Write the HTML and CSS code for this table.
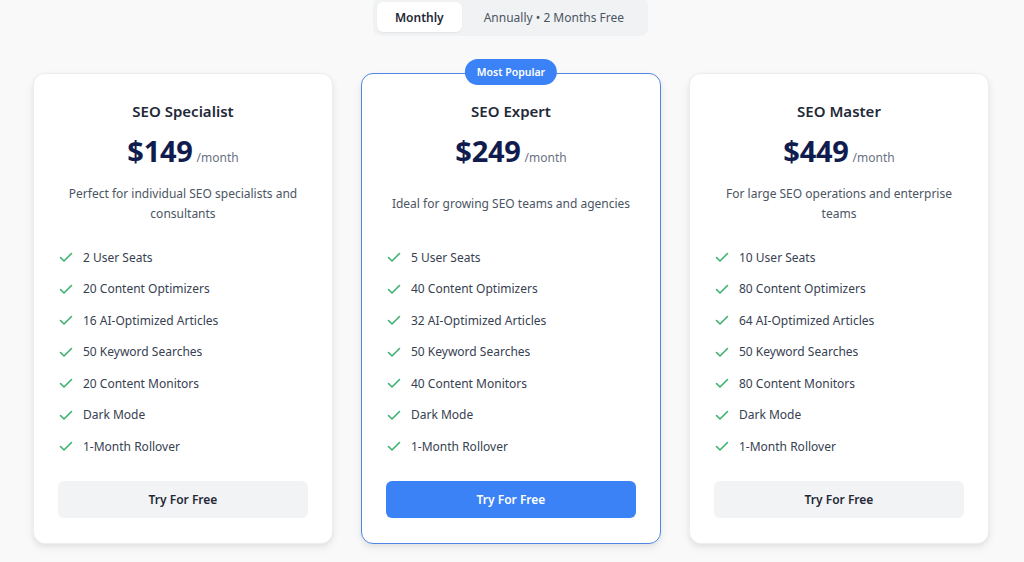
FILE: index.html
```html
<!DOCTYPE html>
<html lang="en">
<head>
<meta charset="utf-8">
<title>Pricing</title>
<link rel="stylesheet" href="styles.css">
</head>
<body>
<div class="page">
  <div class="toggle">
    <button class="toggle-opt active">Monthly</button>
    <button class="toggle-opt">Annually • 2 Months Free</button>
  </div>

  <div class="plans">
    <div class="card">
      <h3 class="plan-name">SEO Specialist</h3>
      <div class="price"><span class="amount">$149</span><span class="per">/month</span></div>
      <p class="desc">Perfect for individual SEO specialists and consultants</p>
      <ul class="features">
        <li><svg class="check" viewBox="0 0 16 16"><path d="M2.5 8.5l3.5 3.5 7.5-7.5"/></svg>2 User Seats</li>
        <li><svg class="check" viewBox="0 0 16 16"><path d="M2.5 8.5l3.5 3.5 7.5-7.5"/></svg>20 Content Optimizers</li>
        <li><svg class="check" viewBox="0 0 16 16"><path d="M2.5 8.5l3.5 3.5 7.5-7.5"/></svg>16 AI-Optimized Articles</li>
        <li><svg class="check" viewBox="0 0 16 16"><path d="M2.5 8.5l3.5 3.5 7.5-7.5"/></svg>50 Keyword Searches</li>
        <li><svg class="check" viewBox="0 0 16 16"><path d="M2.5 8.5l3.5 3.5 7.5-7.5"/></svg>20 Content Monitors</li>
        <li><svg class="check" viewBox="0 0 16 16"><path d="M2.5 8.5l3.5 3.5 7.5-7.5"/></svg>Dark Mode</li>
        <li><svg class="check" viewBox="0 0 16 16"><path d="M2.5 8.5l3.5 3.5 7.5-7.5"/></svg>1-Month Rollover</li>
      </ul>
      <button class="cta">Try For Free</button>
    </div>

    <div class="card featured">
      <span class="badge">Most Popular</span>
      <h3 class="plan-name">SEO Expert</h3>
      <div class="price"><span class="amount">$249</span><span class="per">/month</span></div>
      <p class="desc">Ideal for growing SEO teams and agencies</p>
      <ul class="features">
        <li><svg class="check" viewBox="0 0 16 16"><path d="M2.5 8.5l3.5 3.5 7.5-7.5"/></svg>5 User Seats</li>
        <li><svg class="check" viewBox="0 0 16 16"><path d="M2.5 8.5l3.5 3.5 7.5-7.5"/></svg>40 Content Optimizers</li>
        <li><svg class="check" viewBox="0 0 16 16"><path d="M2.5 8.5l3.5 3.5 7.5-7.5"/></svg>32 AI-Optimized Articles</li>
        <li><svg class="check" viewBox="0 0 16 16"><path d="M2.5 8.5l3.5 3.5 7.5-7.5"/></svg>50 Keyword Searches</li>
        <li><svg class="check" viewBox="0 0 16 16"><path d="M2.5 8.5l3.5 3.5 7.5-7.5"/></svg>40 Content Monitors</li>
        <li><svg class="check" viewBox="0 0 16 16"><path d="M2.5 8.5l3.5 3.5 7.5-7.5"/></svg>Dark Mode</li>
        <li><svg class="check" viewBox="0 0 16 16"><path d="M2.5 8.5l3.5 3.5 7.5-7.5"/></svg>1-Month Rollover</li>
      </ul>
      <button class="cta primary">Try For Free</button>
    </div>

    <div class="card">
      <h3 class="plan-name">SEO Master</h3>
      <div class="price"><span class="amount">$449</span><span class="per">/month</span></div>
      <p class="desc">For large SEO operations and enterprise teams</p>
      <ul class="features">
        <li><svg class="check" viewBox="0 0 16 16"><path d="M2.5 8.5l3.5 3.5 7.5-7.5"/></svg>10 User Seats</li>
        <li><svg class="check" viewBox="0 0 16 16"><path d="M2.5 8.5l3.5 3.5 7.5-7.5"/></svg>80 Content Optimizers</li>
        <li><svg class="check" viewBox="0 0 16 16"><path d="M2.5 8.5l3.5 3.5 7.5-7.5"/></svg>64 AI-Optimized Articles</li>
        <li><svg class="check" viewBox="0 0 16 16"><path d="M2.5 8.5l3.5 3.5 7.5-7.5"/></svg>50 Keyword Searches</li>
        <li><svg class="check" viewBox="0 0 16 16"><path d="M2.5 8.5l3.5 3.5 7.5-7.5"/></svg>80 Content Monitors</li>
        <li><svg class="check" viewBox="0 0 16 16"><path d="M2.5 8.5l3.5 3.5 7.5-7.5"/></svg>Dark Mode</li>
        <li><svg class="check" viewBox="0 0 16 16"><path d="M2.5 8.5l3.5 3.5 7.5-7.5"/></svg>1-Month Rollover</li>
      </ul>
      <button class="cta">Try For Free</button>
    </div>
  </div>
</div>
</body>
</html>
```

FILE: styles.css
```css
* { box-sizing: border-box; }

html, body {
  margin: 0;
  padding: 0;
  background: #f9f9fa;
  font-family: "Noto Sans", "Open Sans", sans-serif;
  color: #1f2937;
}

.page {
  display: flex;
  flex-direction: column;
  align-items: center;
  height: 562px;
  overflow: hidden;
}

.toggle {
  display: flex;
  margin-top: -3px;
  margin-left: -3px;
  padding: 5px 4px 4px;
  background: #f1f2f4;
  border-radius: 8px;
}

.toggle-opt {
  border: none;
  background: transparent;
  font-family: inherit;
  font-size: 12px;
  font-weight: 400;
  color: #4b5563;
  height: 30px;
  padding: 0 20px 0 22px;
  border-radius: 6px;
  cursor: pointer;
}

.toggle-opt.active {
  background: #ffffff;
  color: #1f2937;
  font-weight: 600;
  padding: 0 18px;
  box-shadow: 0 1px 2px rgba(0,0,0,0.06);
}

.plans {
  display: flex;
  gap: 28px;
  margin-top: 37px;
  margin-left: -2px;
}

.card {
  position: relative;
  width: 300px;
  background: #ffffff;
  border: 1px solid #eceef1;
  border-radius: 12px;
  padding: 27px 24px 25px;
  display: flex;
  flex-direction: column;
  align-items: stretch;
  box-shadow: 0 2px 4px rgba(0,0,0,0.05), 0 4px 10px rgba(0,0,0,0.06);
}

.card.featured {
  border-color: #4f86e6;
}

.badge {
  position: absolute;
  top: -15px;
  left: 50%;
  transform: translateX(-50%);
  background: #3b82f6;
  color: #ffffff;
  font-size: 10.5px;
  font-weight: 600;
  line-height: 26px;
  padding: 0 12px;
  border-radius: 13px;
  white-space: nowrap;
}

.plan-name {
  margin: 0;
  text-align: center;
  font-size: 15px;
  line-height: 20px;
  font-weight: 600;
  color: #1f2937;
}

.price {
  margin-top: 12px;
  display: flex;
  justify-content: center;
  align-items: baseline;
  gap: 4px;
  height: 36px;
}

.amount {
  font-size: 29px;
  line-height: 36px;
  font-weight: 700;
  color: #111c4e;
  letter-spacing: -0.3px;
}

.per {
  font-size: 12px;
  color: #6b7280;
}

.desc {
  margin: 15px 0 0;
  height: 40px;
  display: flex;
  align-items: center;
  justify-content: center;
  text-align: center;
  font-size: 12px;
  line-height: 20px;
  color: #4b5563;
  padding: 0;
}

.features {
  list-style: none;
  margin: 23px 0 0;
  padding: 0;
  display: flex;
  flex-direction: column;
  gap: 11.5px;
}

.features li {
  display: flex;
  align-items: center;
  gap: 9px;
  height: 20px;
  font-size: 12px;
  color: #374151;
}

.check {
  width: 16px;
  height: 16px;
  flex: none;
  fill: none;
  stroke: #3cb371;
  stroke-width: 1.6;
  stroke-linecap: round;
  stroke-linejoin: round;
}

.cta {
  margin-top: 25px;
  height: 37px;
  border: none;
  border-radius: 6px;
  background: #f2f3f5;
  color: #1f2937;
  font-family: inherit;
  font-size: 12px;
  font-weight: 600;
  cursor: pointer;
}

.cta.primary {
  background: #3b82f6;
  color: #ffffff;
}
```
